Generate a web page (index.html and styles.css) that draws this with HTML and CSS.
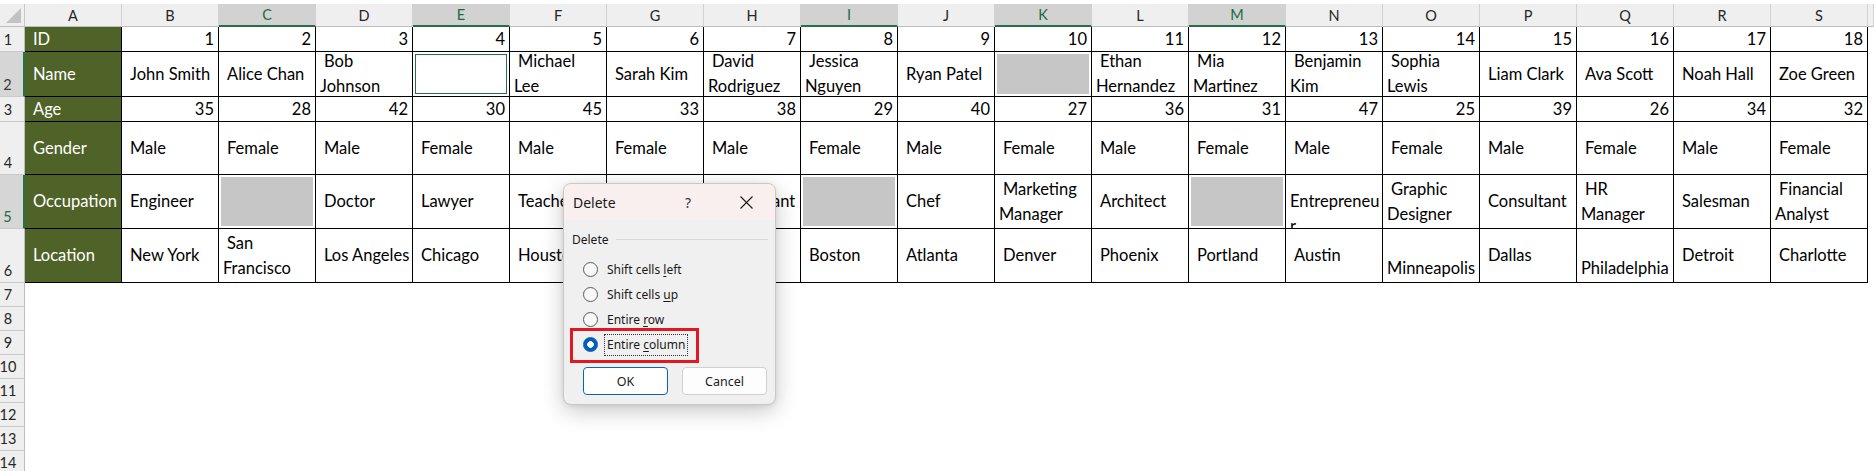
FILE: index.html
```html
<!DOCTYPE html>
<html lang="en">
<head>
<meta charset="utf-8">
<title>Delete dialog</title>
<link rel="stylesheet" href="styles.css">
</head>
<body>
<div class="sheet">
  <div class="corner"><div class="tri"></div></div>
  <div class="ch">A</div><div class="ch">B</div><div class="ch sel">C</div><div class="ch">D</div><div class="ch sel">E</div><div class="ch">F</div><div class="ch">G</div><div class="ch">H</div><div class="ch sel">I</div><div class="ch">J</div><div class="ch sel">K</div><div class="ch">L</div><div class="ch sel">M</div><div class="ch">N</div><div class="ch">O</div><div class="ch">P</div><div class="ch">Q</div><div class="ch">R</div><div class="ch">S</div><div class="ch"></div>

  <div class="rh">1</div>
  <div class="c h">ID</div>
  <div class="c n">1</div><div class="c n">2</div><div class="c n">3</div><div class="c n">4</div><div class="c n">5</div><div class="c n">6</div><div class="c n">7</div><div class="c n">8</div><div class="c n">9</div><div class="c n">10</div><div class="c n">11</div><div class="c n">12</div><div class="c n">13</div><div class="c n">14</div><div class="c n">15</div><div class="c n">16</div><div class="c n">17</div><div class="c n">18</div>
  <div class="tc"></div>

  <div class="rh sel dark">2</div>
  <div class="c h">Name</div>
  <div class="c">John Smith</div>
  <div class="c">Alice Chan</div>
  <div class="c">Bob<br>Johnson</div>
  <div class="c act"></div>
  <div class="c">Michael<br>Lee</div>
  <div class="c">Sarah Kim</div>
  <div class="c">David<br>Rodriguez</div>
  <div class="c">Jessica<br>Nguyen</div>
  <div class="c">Ryan Patel</div>
  <div class="c g"></div>
  <div class="c">Ethan<br>Hernandez</div>
  <div class="c">Mia<br>Martinez</div>
  <div class="c">Benjamin<br>Kim</div>
  <div class="c">Sophia<br>Lewis</div>
  <div class="c">Liam Clark</div>
  <div class="c">Ava Scott</div>
  <div class="c">Noah Hall</div>
  <div class="c">Zoe Green</div>
  <div class="tc"></div>

  <div class="rh">3</div>
  <div class="c h">Age</div>
  <div class="c n">35</div><div class="c n">28</div><div class="c n">42</div><div class="c n">30</div><div class="c n">45</div><div class="c n">33</div><div class="c n">38</div><div class="c n">29</div><div class="c n">40</div><div class="c n">27</div><div class="c n">36</div><div class="c n">31</div><div class="c n">47</div><div class="c n">25</div><div class="c n">39</div><div class="c n">26</div><div class="c n">34</div><div class="c n">32</div>
  <div class="tc"></div>

  <div class="rh">4</div>
  <div class="c h">Gender</div>
  <div class="c">Male</div><div class="c">Female</div><div class="c">Male</div><div class="c">Female</div><div class="c">Male</div><div class="c">Female</div><div class="c">Male</div><div class="c">Female</div><div class="c">Male</div><div class="c">Female</div><div class="c">Male</div><div class="c">Female</div><div class="c">Male</div><div class="c">Female</div><div class="c">Male</div><div class="c">Female</div><div class="c">Male</div><div class="c">Female</div>
  <div class="tc"></div>

  <div class="rh sel">5</div>
  <div class="c h">Occupation</div>
  <div class="c">Engineer</div>
  <div class="c g"></div>
  <div class="c">Doctor</div>
  <div class="c">Lawyer</div>
  <div class="c">Teacher</div>
  <div class="c">Nurse</div>
  <div class="c">Accountant</div>
  <div class="c g"></div>
  <div class="c">Chef</div>
  <div class="c">Marketing<br>Manager</div>
  <div class="c">Architect</div>
  <div class="c g"></div>
  <div class="c noind"><span class="one">Entrepreneu<br>r</span></div>
  <div class="c">Graphic<br>Designer</div>
  <div class="c">Consultant</div>
  <div class="c">HR<br>Manager</div>
  <div class="c">Salesman</div>
  <div class="c">Financial<br>Analyst</div>
  <div class="tc"></div>

  <div class="rh">6</div>
  <div class="c h">Location</div>
  <div class="c">New York</div>
  <div class="c">San<br>Francisco</div>
  <div class="c">Los Angeles</div>
  <div class="c">Chicago</div>
  <div class="c">Houston</div>
  <div class="c">Seattle</div>
  <div class="c">Miami</div>
  <div class="c">Boston</div>
  <div class="c">Atlanta</div>
  <div class="c">Denver</div>
  <div class="c">Phoenix</div>
  <div class="c">Portland</div>
  <div class="c">Austin</div>
  <div class="c"><br>Minneapolis</div>
  <div class="c">Dallas</div>
  <div class="c"><br>Philadelphia</div>
  <div class="c">Detroit</div>
  <div class="c">Charlotte</div>
  <div class="tc"></div>

  <div class="rh">7</div><div class="empty"></div>
  <div class="rh">8</div><div class="empty"></div>
  <div class="rh">9</div><div class="empty"></div>
  <div class="rh">10</div><div class="empty"></div>
  <div class="rh">11</div><div class="empty"></div>
  <div class="rh">12</div><div class="empty"></div>
  <div class="rh">13</div><div class="empty"></div>
  <div class="rh">14</div><div class="empty"></div>
</div>

<div class="dlg">
  <div class="dlg-title">
    <span class="dt">Delete</span>
    <span class="help">?</span>
    <span class="close"><svg width="13" height="13" viewBox="0 0 13 13"><path d="M0.5 0.5 L12.5 12.5 M12.5 0.5 L0.5 12.5" stroke="#1a1a1a" stroke-width="1.1" fill="none"/></svg></span>
  </div>
  <div class="dlg-body">
    <div class="grp"><span class="grp-l">Delete</span><span class="rule"></span></div>
    <div class="opts">
      <div class="opt"><span class="radio"></span><span class="lbl">Shift cells <u>l</u>eft</span></div>
      <div class="opt"><span class="radio"></span><span class="lbl">Shift cells <u>u</u>p</span></div>
      <div class="opt"><span class="radio"></span><span class="lbl">Entire <u>r</u>ow</span></div>
      <div class="opt"><span class="radio on"></span><span class="lbl focus">Entire <u>c</u>olumn</span></div>
    </div>
    <div class="btns"><button class="btn ok">OK</button><button class="btn">Cancel</button></div>
  </div>
  <div class="mark"></div>
</div>
</body>
</html>
```

FILE: styles.css
```css
* { box-sizing: border-box; margin: 0; padding: 0; }
html, body { background: #fff; }
body {
  width: 1874px;
  height: 471px;
  overflow: hidden;
  position: relative;
  padding-top: 4px;
  font-family: Lato, "Noto Sans", sans-serif;
}
.sheet {
  display: grid;
  grid-template-columns: 25px repeat(19, 97px) 1fr;
  grid-template-rows: 23px 25px 45px 25px 53px 54px 54px repeat(8, 24px);
}
.corner {
  background: #efefef;
  border-right: 1px solid #c8c8c8;
  border-bottom: 1px solid #bdbdbd;
  display: flex;
  align-items: flex-end;
  justify-content: flex-end;
  padding: 0 3px 3px 0;
}
.tri {
  width: 15px;
  height: 15px;
  background: #c2c2c2;
  clip-path: polygon(100% 0, 100% 100%, 0 100%);
}
.ch {
  background: #efefef;
  border-right: 1px solid #d2d2d2;
  border-bottom: 1px solid #bdbdbd;
  display: flex;
  align-items: center;
  justify-content: center;
  font-size: 14.5px;
  color: #262626;
}
.ch.sel {
  background: #d2d2d2;
  color: #1d6b40;
  border-bottom: 2px solid #217346;
}
.rh {
  background: #efefef;
  border-right: 1px solid #bdbdbd;
  border-bottom: 1px solid #c9c9c9;
  display: flex;
  align-items: flex-end;
  justify-content: center;
  padding: 0 8px 1px 0;
  font-size: 14.5px;
  line-height: 20px;
  color: #262626;
}
.rh.sel {
  background: #d6d6d6;
  color: #1d6b40;
  border-right: 2px solid #217346;
}
.rh.sel.dark { color: #3a3a3a; }
.c {
  border-right: 1px solid #000;
  border-bottom: 1px solid #000;
  display: flex;
  align-items: center;
  padding: 0 4px;
  font-size: 16.5px;
  line-height: 25px;
  color: #000;
  overflow: hidden;
  white-space: nowrap;
  text-indent: 4px;
}
.c.n { justify-content: flex-end; text-indent: 0; }
.c.h { background: #4f6228; color: #fff; }
.c.g { background: #c6c6c6; box-shadow: inset 0 0 0 2px #fff; }
.c.act { box-shadow: inset 0 0 0 2px #fff, inset 0 0 0 3px #217346; }
.c.noind { text-indent: 0; }
.one { display: block; height: 25px; }
.tc { background: #fff; }
.empty { grid-column: 2 / -1; }

/* dialog */
.dlg {
  position: absolute;
  left: 563px;
  top: 183px;
  width: 213px;
  height: 222px;
  background: #f0f0f0;
  border: 1px solid #c8c8c8;
  border-radius: 8px;
  box-shadow: 0 6px 22px rgba(0, 0, 0, 0.22), 0 1px 4px rgba(0, 0, 0, 0.08);
  overflow: hidden;
  font-family: "Noto Sans", "Open Sans", sans-serif;
  color: #1a1a1a;
}
.dlg-title {
  height: 36px;
  background: #f9efef;
  display: flex;
  align-items: center;
  padding: 0 6px 0 9px;
}
.dt { flex: 1; font-size: 14px; }
.help {
  width: 40px;
  margin-right: 15px;
  text-align: center;
  font-size: 14px;
  color: #333;
}
.close {
  width: 46px;
  display: flex;
  align-items: center;
  justify-content: center;
}
.dlg-body { padding: 11px 7px 0 8px; }
.grp {
  height: 16px;
  display: flex;
  align-items: center;
  font-size: 12px;
}
.rule {
  flex: 1;
  height: 1px;
  background: #d9d9d9;
  margin-left: 7px;
}
.opts { margin-top: 10px; }
.opt {
  height: 25px;
  display: flex;
  align-items: center;
  padding-left: 11px;
  font-size: 12px;
}
.radio {
  width: 15px;
  height: 15px;
  border: 1px solid #5a5a5a;
  border-radius: 50%;
  background: #f8f8f8;
  margin-right: 6px;
  flex: none;
}
.radio.on {
  border-color: #005fb8;
  background: radial-gradient(circle, #fff 0 3px, #005fb8 3.6px);
}
.lbl {
  border: 1px dotted transparent;
  padding: 0 2px;
  line-height: 20px;
}
.lbl.focus { border-color: #333; }
.lbl u { text-underline-offset: 2px; }
.btns {
  display: flex;
  gap: 14px;
  margin-top: 10px;
  padding-left: 11px;
}
.btn {
  width: 85px;
  height: 28px;
  border: 1px solid #d0d0d0;
  border-radius: 4px;
  background: #fdfdfd;
  font-family: "Noto Sans", "Open Sans", sans-serif;
  font-size: 12.5px;
  color: #1a1a1a;
}
.btn.ok { border: 1px solid #0067c0; background: #fff; }
.mark {
  position: absolute;
  left: 6px;
  top: 144px;
  width: 129px;
  height: 35px;
  border: 3px solid #e3171f;
}
```
